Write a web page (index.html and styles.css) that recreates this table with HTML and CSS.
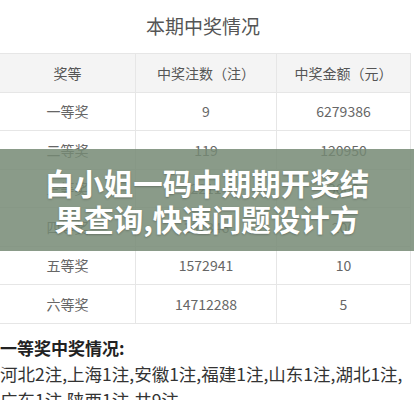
FILE: index.html
```html
<!DOCTYPE html>
<html>
<head>
    <title>本期中奖情况</title>
    <link rel="stylesheet" href="styles.css">
</head>
<body>
    <div class="page">
        <h2 class="title">本期中奖情况</h2>

        <table class="prize-table">
            <tr>
                <th>奖等</th>
                <th>中奖注数（注）</th>
                <th>中奖金额（元）</th>
            </tr>
            <tr><td>一等奖</td><td>9</td><td>6279386</td></tr>
            <tr><td>二等奖</td><td>119</td><td>120950</td></tr>
            <tr><td>三等奖</td><td>2211</td><td>3000</td></tr>
            <tr><td>四等奖</td><td>107846</td><td>200</td></tr>
            <tr><td>五等奖</td><td>1572941</td><td>10</td></tr>
            <tr><td>六等奖</td><td>14712288</td><td>5</td></tr>
        </table>

        <div class="detail">
            <h3>一等奖中奖情况:</h3>
            <p>河北2注,上海1注,安徽1注,福建1注,山东1注,湖北1注,<br>广东1注,陕西1注,共9注。</p>
        </div>

        <div class="banner">
            <span>白小姐一码中期期开奖结<br>果查询,快速问题设计方</span>
        </div>
    </div>
</body>
</html>
```

FILE: styles.css
```css
body {
    margin: 0;
    background-color: #ffffff;
    font-family: "Noto Sans CJK SC", sans-serif;
    color: #333;
}

.page {
    position: relative;
    width: 414px;
    height: 400px;
    overflow: hidden;
}

.title {
    margin: 0;
    height: 53px;
    line-height: 52px;
    text-align: center;
    font-size: 19px;
    font-weight: normal;
    color: #555;
    padding-right: 8px;
}

.prize-table {
    width: 411px;
    border-collapse: collapse;
    table-layout: fixed;
}

.prize-table th,
.prize-table td {
    height: 37.5px;
    padding: 0;
    border: 1px solid #e6e6e6;
    text-align: center;
    font-size: 14px;
    font-weight: normal;
    color: #666;
}

.prize-table th {
    background-color: #f4f4f4;
    color: #555;
}

.prize-table th:nth-child(1) { width: 135px; }
.prize-table th:nth-child(2) { width: 140px; }

.prize-table tr > :first-child {
    border-left: none;
}

.detail {
    padding-top: 11px;
}

.detail h3 {
    margin: 0;
    font-size: 17px;
    line-height: 26px;
    font-weight: bold;
    color: #222;
}

.detail p {
    margin: 0;
    font-size: 17.5px;
    line-height: 26px;
    color: #333;
    white-space: nowrap;
}

/* translucent title band over the table */
.banner {
    position: absolute;
    top: 149px;
    left: 0;
    width: 100%;
    height: 102px;
    background-color: rgba(118, 137, 116, 0.85);
    display: flex;
    align-items: center;
    justify-content: center;
}

.banner span {
    color: #ffffff;
    font-size: 29.5px;
    line-height: 36px;
    font-weight: bold;
    text-align: center;
    text-shadow: 0 1px 2px rgba(0, 0, 0, 0.25);
}
```
